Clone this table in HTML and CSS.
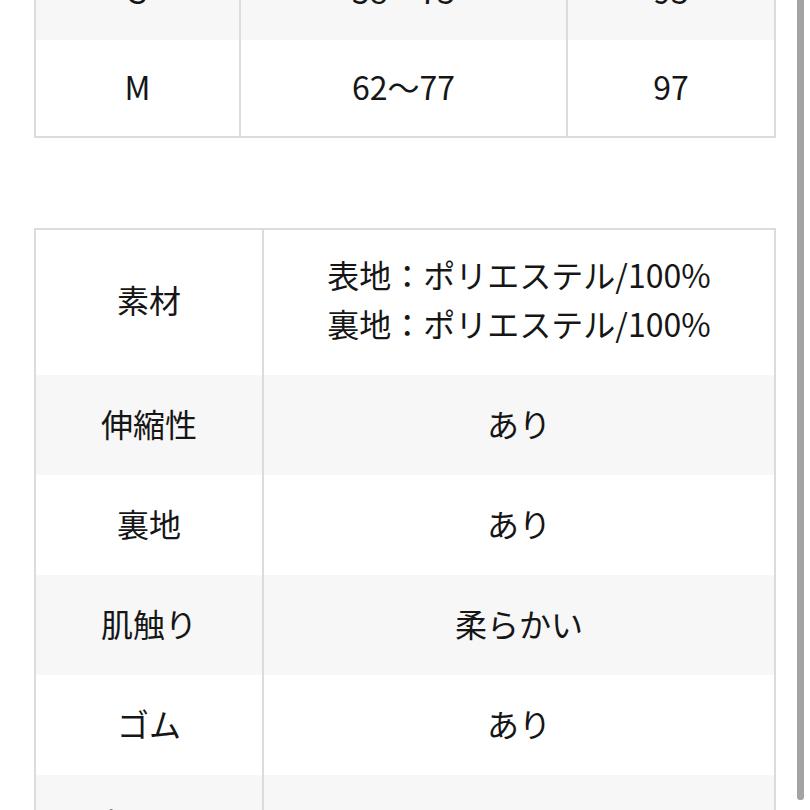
FILE: index.html
```html
<!DOCTYPE html>
<html lang="ja">
<head>
<meta charset="utf-8">
<title>サイズ・素材</title>
<link rel="stylesheet" href="styles.css">
</head>
<body>
<div class="page">
  <div class="spec size-table">
    <div class="cell shade">S</div>
    <div class="cell shade">58〜73</div>
    <div class="cell shade last">93</div>
    <div class="cell">M</div>
    <div class="cell">62〜77</div>
    <div class="cell last">97</div>
  </div>

  <div class="spec material-table">
    <div class="cell double">素材</div>
    <div class="cell double last">表地：ポリエステル/100%<br>裏地：ポリエステル/100%</div>
    <div class="cell shade">伸縮性</div>
    <div class="cell shade last">あり</div>
    <div class="cell">裏地</div>
    <div class="cell last">あり</div>
    <div class="cell shade">肌触り</div>
    <div class="cell shade last">柔らかい</div>
    <div class="cell">ゴム</div>
    <div class="cell last">あり</div>
    <div class="cell shade">ポケット</div>
    <div class="cell shade last">あり</div>
  </div>
</div>
<div class="scrollbar"></div>
</body>
</html>
```

FILE: styles.css
```css
html, body {
  margin: 0;
  padding: 0;
  background: #ffffff;
  overflow: hidden;
}

body {
  font-family: "Noto Sans CJK JP", "Noto Sans", sans-serif;
  color: #161616;
  height: 810px;
  position: relative;
}

.page {
  padding: 0 34px;
}

.spec {
  display: grid;
  border: 2px solid #dcdcdc;
}

.size-table {
  grid-template-columns: 205px 327px 1fr;
  margin-top: -58px;
}

.material-table {
  grid-template-columns: 228px 1fr;
  margin-top: 90px;
}

.cell {
  font-size: 32px;
  line-height: 49px;
  padding: 24px 6px 27px;
  text-align: center;
  display: flex;
  align-items: center;
  justify-content: center;
  border-right: 2px solid #dcdcdc;
  background: #ffffff;
}

.size-table .cell {
  padding: 22px 6px 25px;
}

.cell.double {
  padding: 20px 6px 27px;
}

.cell.last {
  border-right: none;
}

.cell.shade {
  background: #f7f7f7;
}

.scrollbar {
  position: absolute;
  top: 0;
  left: 797px;
  width: 7px;
  height: 800px;
  z-index: 10;
  border-radius: 0 0 3px 3px;
  background: #a3a3a3;
}
```
